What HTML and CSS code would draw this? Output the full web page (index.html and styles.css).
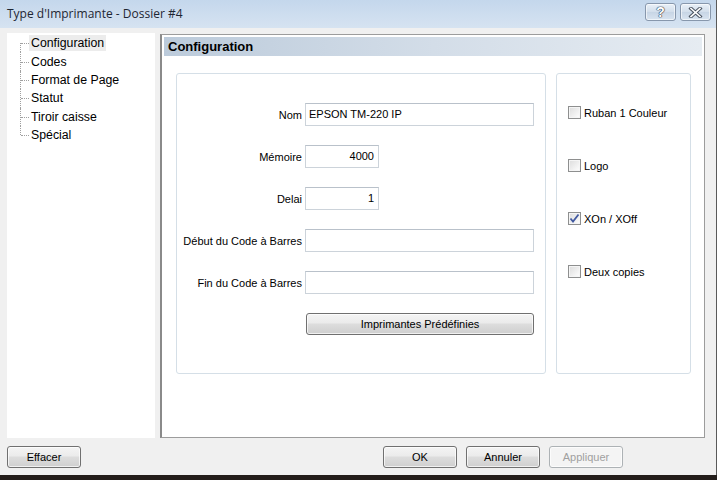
FILE: index.html
```html
<!DOCTYPE html>
<html lang="fr">

<head>
  <meta charset="UTF-8" />
  <title>Type d'Imprimante - Dossier #4</title>
  <link rel="stylesheet" href="styles.css">
</head>

<body>
  <div class="window">
    <div class="titlebar">
      <span class="title">Type d'Imprimante - Dossier #4</span>
      <div class="caption-buttons">
        <div class="cap-btn help">?</div>
        <div class="cap-btn close">
          <svg width="15" height="11" viewBox="0 0 15 11">
            <path d="M3 1.5 L12 9.5 M12 1.5 L3 9.5" stroke="#4b5563" stroke-width="3.6" stroke-linecap="square" />
            <path d="M3 1.5 L12 9.5 M12 1.5 L3 9.5" stroke="#ffffff" stroke-width="1.6" stroke-linecap="square" />
          </svg>
        </div>
      </div>
    </div>

    <div class="content">
      <div class="tree">
        <ul>
          <li class="selected"><span>Configuration</span></li>
          <li><span>Codes</span></li>
          <li><span>Format de Page</span></li>
          <li><span>Statut</span></li>
          <li><span>Tiroir caisse</span></li>
          <li class="last"><span>Spécial</span></li>
        </ul>
      </div>

      <div class="panel">
        <div class="panel-header">Configuration</div>
        <div class="panel-body">
          <div class="group fields">
            <label>Nom</label>
            <div class="input wide">EPSON TM-220 IP</div>
            <label>Mémoire</label>
            <div class="input short num">4000</div>
            <label>Delai</label>
            <div class="input short num">1</div>
            <label>Début du Code à Barres</label>
            <div class="input wide"></div>
            <label>Fin du Code à Barres</label>
            <div class="input wide"></div>
            <span></span>
            <div class="btn preset">Imprimantes Prédéfinies</div>
          </div>

          <div class="group options">
            <div class="check"><span class="box"></span>Ruban 1 Couleur</div>
            <div class="check"><span class="box"></span>Logo</div>
            <div class="check">
              <span class="box">
                <svg width="11" height="11" viewBox="0 0 11 11">
                  <path d="M1.5 5.5 L4 8.5 L9.5 1.5" fill="none" stroke="#4159a0" stroke-width="1.8" />
                </svg>
              </span>XOn / XOff
            </div>
            <div class="check"><span class="box"></span>Deux copies</div>
          </div>
        </div>
      </div>
    </div>

    <div class="footer">
      <div class="btn">Effacer</div>
      <div class="footer-right">
        <div class="btn">OK</div>
        <div class="btn">Annuler</div>
        <div class="btn disabled">Appliquer</div>
      </div>
    </div>
  </div>
</body>

</html>
```

FILE: styles.css
```css
/* Base */
body {
  margin: 0;
  background-color: #231d1a;
  font-family: 'Liberation Sans', Arial, sans-serif;
  font-size: 11px;
  color: #000;
}

.window {
  width: 716px;
  height: 475px;
  background-color: #f0f0f0;
  border-right: 1px solid #5a5a5a;
  display: flex;
  flex-direction: column;
}

/* Title bar */
.titlebar {
  height: 28px;
  background: linear-gradient(to bottom, #c4d7ec, #d6e3f1);
  display: flex;
  justify-content: space-between;
  align-items: center;
  padding: 0 5px 0 7px;
  box-sizing: border-box;
}

.title {
  font-family: 'Open Sans', sans-serif;
  font-size: 12px;
  color: #1e2633;
  margin-top: -1px;
}

.caption-buttons {
  display: flex;
  gap: 4px;
  margin-top: -4px;
}

.cap-btn {
  width: 29px;
  height: 16px;
  border: 1px solid #8797ac;
  border-radius: 3px;
  background: linear-gradient(to bottom, #e9f0f8, #d2deeb 50%, #c7d5e5 51%, #d9e4f0);
  display: flex;
  justify-content: center;
  align-items: center;
  box-shadow: inset 0 0 0 1px rgba(255, 255, 255, 0.6);
}

.cap-btn.help {
  font-weight: bold;
  font-size: 14px;
  color: #fff;
  text-shadow: 0 0 1px #3c4756, 0 0 1px #3c4756, 0 0 1px #3c4756, 0 0 1px #3c4756;
}

/* Content area */
.content {
  display: flex;
  gap: 5px;
  padding: 5px 0 0 7px;
  height: 410px;
  box-sizing: border-box;
}

.tree {
  width: 148px;
  background-color: #fff;
}

.tree ul {
  list-style: none;
  margin: 0;
  padding: 1px 0 0 13px;
}

.tree li {
  position: relative;
  height: 18.4px;
  display: flex;
  align-items: center;
  font-size: 12.3px;
  padding-left: 9px;
}

.tree li::before {
  content: "";
  position: absolute;
  left: 0;
  top: 0;
  bottom: 0;
  border-left: 1px dotted #a0a0a0;
}

.tree li.last::before {
  bottom: 50%;
}

.tree li::after {
  content: "";
  position: absolute;
  left: 1px;
  top: 50%;
  width: 8px;
  border-top: 1px dotted #a0a0a0;
}

.tree li:first-child::before {
  top: 50%;
}

.tree li span {
  padding: 1px 2px;
}

.tree li.selected span {
  background-color: #ececec;
}

/* Main panel */
.panel {
  width: 545px;
  margin-top: 1px;
  height: 404px;
  box-sizing: border-box;
  border: 1px solid #9c9c9c;
  border-left: 2px solid #8a8a8a;
  padding: 2px;
  background-color: #fff;
}

.panel-header {
  height: 19px;
  line-height: 19px;
  padding-left: 4px;
  font-size: 13px;
  font-weight: bold;
  background: linear-gradient(to right, #bccbdb, #d3dde8 50%, #e6ecf2);
}

.panel-body {
  display: flex;
  gap: 10px;
  padding: 17px 0 0 12px;
}

.group {
  height: 301px;
  box-sizing: border-box;
  border: 1px solid #d5dfe7;
  border-radius: 3px;
  background-color: #fff;
}

/* Field grid */
.fields {
  width: 370px;
  display: grid;
  grid-template-columns: 125px auto;
  grid-auto-rows: 23px;
  column-gap: 3px;
  row-gap: 19px;
  align-content: start;
  padding-top: 29px;
}

.fields label {
  text-align: right;
  align-self: center;
}

.input {
  height: 23px;
  box-sizing: border-box;
  border: 1px solid #ccd3da;
  border-top-color: #b9c1ca;
  background-color: #fff;
  padding: 0 3px;
  line-height: 21px;
  font-size: 11px;
}

.input.wide {
  width: 229px;
}

.input.short {
  width: 74px;
}

.input.num {
  text-align: right;
  padding-right: 4px;
}

/* Buttons */
.btn {
  width: 74px;
  height: 22px;
  box-sizing: border-box;
  border: 1px solid #707070;
  border-radius: 3px;
  background: linear-gradient(to bottom, #f4f4f4, #ebebeb 45%, #dddddd 50%, #cfcfcf);
  box-shadow: inset 0 0 0 1px rgba(255, 255, 255, 0.7);
  display: flex;
  justify-content: center;
  align-items: center;
  font-size: 11px;
}

.btn.preset {
  width: 228px;
  margin-left: 1px;
}

.btn.disabled {
  color: #a0a0a0;
  border-color: #adb2b5;
  background: #f4f4f4;
}

/* Options */
.options {
  width: 135px;
  display: flex;
  flex-direction: column;
  gap: 40px;
  padding: 32px 0 0 11px;
}

.check {
  display: flex;
  align-items: center;
  height: 13px;
  gap: 3px;
}

.check .box {
  width: 13px;
  height: 13px;
  box-sizing: border-box;
  border: 1px solid #8e8f8f;
  background: linear-gradient(135deg, #dcdcdc, #f4f4f4 70%, #ffffff);
  box-shadow: inset 0 0 0 1px #f5f5f5;
  display: flex;
  justify-content: center;
  align-items: center;
}

/* Footer */
.footer {
  display: flex;
  justify-content: space-between;
  padding: 8px 93px 0 7px;
}

.footer-right {
  display: flex;
  gap: 9px;
}
```
